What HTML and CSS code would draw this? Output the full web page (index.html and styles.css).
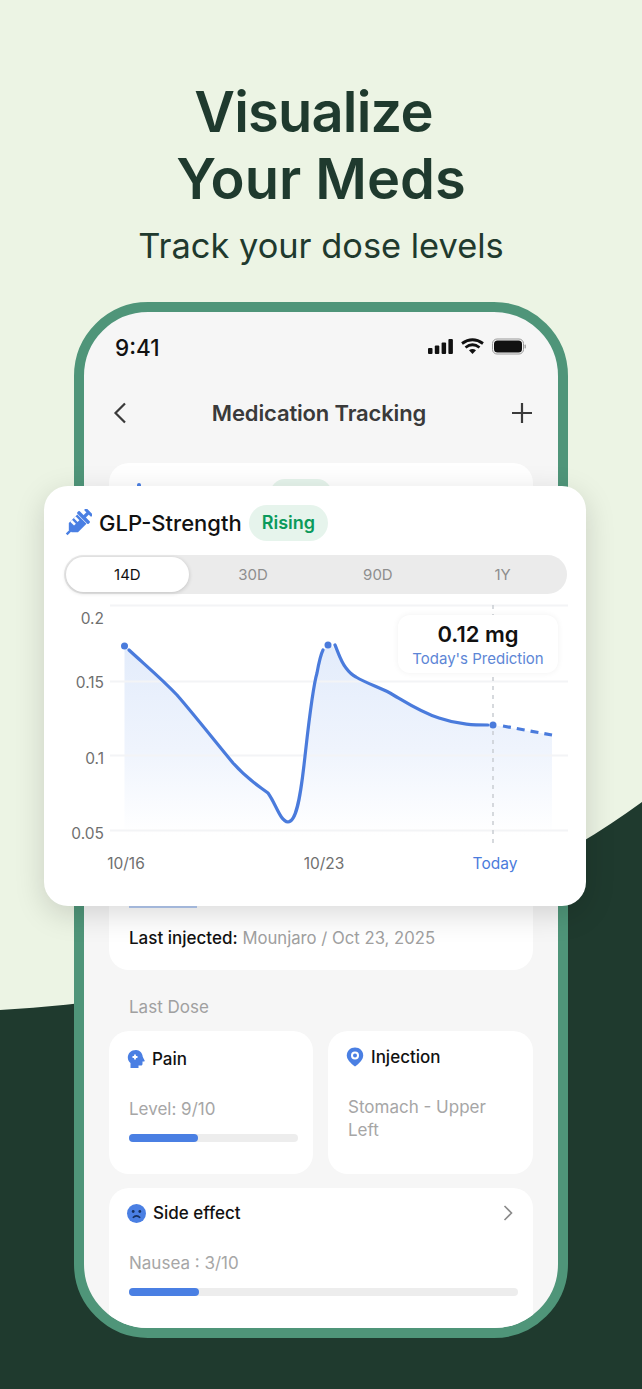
FILE: index.html
```html
<!DOCTYPE html>
<html lang="en">
<head>
  <meta charset="UTF-8">
  <title>Visualize Your Meds</title>
  <link rel="stylesheet" href="styles.css">
</head>
<body>
<div class="page">

  <!-- fondo verde oscuro -->
  <svg class="fondo" width="642" height="1389" viewBox="0 0 642 1389">
    <path d="M0 1010C250 995 480 920 642 802V1389H0Z" fill="#1F3A2E"/>
  </svg>

  <header class="hero">
    <h1><span class="linea-uno">Visualize</span><br>Your Meds</h1>
    <p>Track your dose levels</p>
  </header>

  <div class="telefono">
    <div class="status">
      <span class="hora">9:41</span>
      <svg width="98" height="20" viewBox="0 0 98 20">
        <rect x="0" y="11" width="4.500" height="6" rx="1" fill="#111"/>
        <rect x="6.800" y="8.500" width="4.500" height="8.500" rx="1" fill="#111"/>
        <rect x="13.600" y="5.500" width="4.500" height="11.500" rx="1" fill="#111"/>
        <rect x="20.400" y="2" width="4.500" height="15" rx="1" fill="#111"/>
        <path d="M34 6.500Q44.500-1 55 6.500" fill="none" stroke="#111" stroke-width="2.800"/>
        <path d="M37.500 10.500Q44.500 5 51.500 10.500" fill="none" stroke="#111" stroke-width="2.800"/>
        <path d="M41 13.300Q44.500 10.800 48 13.300L44.500 17Z" fill="#111"/>
        <rect x="64.500" y="2" width="31" height="15" rx="4.500" fill="none" stroke="#999"/>
        <rect x="66" y="3.500" width="28" height="12" rx="3.500" fill="#111"/>
        <rect x="96.500" y="7.500" width="1.500" height="4" rx=".7" fill="#aaa"/>
      </svg>
    </div>

    <div class="nav">
      <svg width="14" height="22" viewBox="0 0 14 22"><path d="M12 1.500 2.500 11 12 20.500" fill="none" stroke="#3A3A3A" stroke-width="2.200"/></svg>
      <span class="nav-titulo">Medication Tracking</span>
      <svg width="22" height="22" viewBox="0 0 22 22"><path d="M11 1V21M1 11H21" fill="none" stroke="#3A3A3A" stroke-width="2.200"/></svg>
    </div>

    <!-- tarjeta principal, casi toda tapada por la flotante -->
    <div class="tarjeta principal">
      <div class="principal-top">
        <span class="icono-oculto"></span>
        <span class="insignia-oculta"></span>
      </div>
      <div class="barra-oculta"></div>
      <div class="ultimo"><b>Last injected:</b> <span>Mounjaro / Oct 23, 2025</span></div>
    </div>

    <div class="seccion">Last Dose</div>

    <div class="dos-col">
      <div class="tarjeta mini">
        <div class="mini-titulo">
          <svg width="18" height="20" viewBox="0 0 18 20">
            <path d="M9 1C4 1 .8 4.500.8 8.500c0 2.500 1.200 4.300 2.700 5.500V19h8v-2.500h2.500c1 0 1.500-.7 1.500-1.500v-2.500h1.700c.5 0 .7-.5.4-.9L15.800 8C15.400 4 12.800 1 9 1Z" fill="#4A7FE3"/>
            <path d="M8 5.500V10.500M5.500 8H10.500" stroke="#fff" stroke-width="1.800"/>
          </svg>
          <span>Pain</span>
        </div>
        <div class="valor">Level: 9/10</div>
        <div class="barra"><div class="relleno" style="width:41%"></div></div>
      </div>
      <div class="tarjeta mini injection">
        <div class="mini-titulo">
          <svg width="18" height="20" viewBox="0 0 18 20">
            <path d="M9 0.500C4.300 0.500.8 4 .8 8.500c0 4 3.600 7.600 8.200 11 4.600-3.400 8.200-7 8.200-11C17.200 4 13.700.500 9 .500Z" fill="#4A7FE3"/>
            <circle cx="9" cy="8.500" r="4" fill="#fff"/>
            <circle cx="9" cy="8.500" r="2" fill="#4A7FE3"/>
          </svg>
          <span>Injection</span>
        </div>
        <div class="valor">Stomach - Upper Left</div>
      </div>
    </div>

    <div class="tarjeta efecto">
      <div class="mini-titulo">
        <svg width="19" height="19" viewBox="0 0 19 19">
          <circle cx="9.500" cy="9.500" r="9.500" fill="#4A7FE3"/>
          <circle cx="6.200" cy="7.500" r="1.400" fill="#16305F"/>
          <circle cx="12.800" cy="7.500" r="1.400" fill="#16305F"/>
          <path d="M5.800 13.800Q9.500 10 13.200 13.800" fill="none" stroke="#16305F" stroke-width="1.600"/>
        </svg>
        <span>Side effect</span>
        <svg class="flecha" width="10" height="16" viewBox="0 0 10 16"><path d="M1.500 1 8.500 8 1.500 15" fill="none" stroke="#8A8A8A" stroke-width="1.600"/></svg>
      </div>
      <div class="valor">Nausea : 3/10</div>
      <div class="barra"><div class="relleno" style="width:18%"></div></div>
    </div>
  </div>

  <!-- tarjeta flotante con la grafica -->
  <div class="flotante">
    <div class="flot-head">
      <svg width="28" height="28" viewBox="0 0 28 28">
        <g transform="rotate(45 14 14)" fill="#4A7FE3">
          <rect x="9" y="-2.500" width="10" height="3" rx="1"/>
          <rect x="12.300" y="0" width="3.400" height="6"/>
          <rect x="6" y="4.500" width="16" height="3.400" rx="1"/>
          <path d="M7.500 8.500H20.500V20.500L16 25H12L7.500 20.500Z"/>
          <rect x="12.800" y="24" width="2.400" height="6"/>
          <rect x="7.500" y="11" width="5.500" height="2.600" fill="#fff"/>
          <rect x="7.500" y="16" width="5.500" height="2.600" fill="#fff"/>
        </g>
      </svg>
      <span class="flot-titulo">GLP-Strength</span>
      <span class="insignia">Rising</span>
    </div>

    <div class="segmento">
      <span class="activo">14D</span>
      <span>30D</span>
      <span>90D</span>
      <span>1Y</span>
    </div>

    <div class="grafica">
      <!-- viewBox: x = pagina - 44, y = pagina - 600 -->
      <svg width="542" height="306" viewBox="0 0 542 306">
        <defs>
          <linearGradient id="area" x1="0" y1="0" x2="0" y2="1">
            <stop offset="0" stop-color="#E3ECFB"/>
            <stop offset=".55" stop-color="#EFF4FD"/>
            <stop offset="1" stop-color="#FFFFFF"/>
          </linearGradient>
        </defs>
        <path d="M80.500 46C100 64 117 78 133 95C152 117 170 140 189 163C204 180 215 186 224 193C232 204 236 221 244 222C252 222 256 200 260 165C264 130 268 90 273 73C276 60 279 50 284 45C289 44 293 52 296 60C300 68 304 73 308 75C320 82 334 87 346 93C360 101 376 112 395 118C415 125 435 125 449 125L508 135V235H80.500Z" fill="url(#area)"/>
        <g stroke="#F3F4F6" stroke-width="2">
          <path d="M66 5.500H524"/>
          <path d="M66 81.500H524"/>
          <path d="M66 155.500H524"/>
          <path d="M66 230.500H524"/>
        </g>
        <path d="M449 5V248" stroke="#C9CDD2" stroke-width="1.500" stroke-dasharray="4 5"/>
        <path d="M85 50C100 64 117 78 133 95C152 117 170 140 189 163C204 180 215 186 224 193C232 204 236 221 244 222C252 222 256 200 260 165C264 130 268 90 273 73C275 62 277 54 279 50M291 45C294 52 297 62 302 68C305 72 308 75 312 77C322 83 334 87 346 93C360 101 376 112 395 118C415 125 432 125 444 125" fill="none" stroke="#4A7BDC" stroke-width="3.200" stroke-linecap="round"/>
        <path d="M459 126L508 135" fill="none" stroke="#4A7BDC" stroke-width="3.200" stroke-dasharray="8 6"/>
        <circle cx="80.500" cy="46" r="3.500" fill="#4A7BDC"/>
        <circle cx="284" cy="45" r="3.500" fill="#4A7BDC"/>
        <circle cx="449" cy="125" r="3.500" fill="#4A7BDC"/>
        <g class="eje">
          <text x="60" y="24" text-anchor="end">0.2</text>
          <text x="60" y="88" text-anchor="end">0.15</text>
          <text x="60" y="164" text-anchor="end">0.1</text>
          <text x="60" y="239" text-anchor="end">0.05</text>
          <text x="82" y="269" text-anchor="middle">10/16</text>
          <text x="280" y="269" text-anchor="middle">10/23</text>
          <text x="451" y="269" text-anchor="middle" class="hoy">Today</text>
        </g>
      </svg>
      <div class="prediccion">
        <b>0.12 mg</b>
        <span>Today's Prediction</span>
      </div>
    </div>
  </div>

</div>
</body>
</html>
```

FILE: styles.css
```css
* {
  box-sizing: border-box;
}
body {
  margin: 0;
  font-family: Inter, "Noto Sans", sans-serif;
}
.page {
  position: relative;
  width: 642px;
  height: 1389px;
  overflow: hidden;
  background-color: #ECF4E4;
}
.fondo {
  position: absolute;
  left: 0;
  top: 0;
}
.hero {
  position: relative;
  padding-top: 79px;
  text-align: center;
  color: #1F3A2E;
}
.hero h1 {
  margin: 0;
  font-size: 56px;
  line-height: 67px;
  font-weight: 600;
}
.linea-uno {
  display: inline-block;
  padding-right: 15px;
  letter-spacing: -0.8px;
}
.hero p {
  margin: 9px 0 0;
  font-size: 34.4px;
  line-height: 48px;
  font-weight: 400;
}

/* telefono */
.telefono {
  position: relative;
  width: 494px;
  height: 1036px;
  margin: 32px 0 0 74px;
  padding: 0 25px;
  border: 10px solid #4F9579;
  border-radius: 74px;
  background-color: #F6F6F6;
  overflow: hidden;
}
.status {
  display: flex;
  justify-content: space-between;
  align-items: center;
  height: 70px;
  padding: 0 0 0 6px;
  margin-right: 7px;
}
.hora {
  font-size: 22.5px;
  font-weight: 500;
  color: #111;
}
.nav {
  display: flex;
  justify-content: space-between;
  align-items: center;
  height: 62px;
  padding: 0 0 0 4px;
}
.nav-titulo {
  font-size: 22px;
  font-weight: 600;
  letter-spacing: -0.15px;
  color: #3A3A3A;
}
.tarjeta {
  background-color: #FFFFFF;
  border-radius: 20px;
}
.principal {
  height: 507px;
  margin-top: 19px;
  padding: 16px 20px 0;
}
.principal-top {
  display: flex;
  align-items: flex-start;
  padding-left: 8px;
  height: 427px;
}
.icono-oculto {
  width: 4px;
  height: 8px;
  margin-top: 4px;
  border-radius: 2px;
  background-color: #4A7FE3;
}
.insignia-oculta {
  width: 62px;
  height: 30px;
  margin-left: 129px;
  border-radius: 15px;
  background-color: #E6F4EC;
}
.barra-oculta {
  width: 68px;
  height: 2px;
  background-color: #B5CBF2;
}
.ultimo {
  margin-top: 19px;
  font-size: 17px;
  line-height: 22px;
  white-space: nowrap;
}
.ultimo b {
  font-weight: 500;
  color: #111;
}
.ultimo span {
  font-size: 16.7px;
  color: #A0A0A0;
}
.seccion {
  margin: 24px 0 0 20px;
  font-size: 17px;
  line-height: 26px;
  color: #A0A0A0;
}
.dos-col {
  display: grid;
  grid-template-columns: 204px 205px;
  gap: 15px;
  margin-top: 11px;
}
.mini {
  height: 143px;
  padding: 16px 15px 0 18px;
}
.mini-titulo {
  display: flex;
  align-items: center;
  gap: 7px;
  font-size: 17px;
  line-height: 24px;
  font-weight: 450;
  color: #111;
}
.injection .mini-titulo {
  margin-top: -2px;
}
.valor {
  margin: 27px 0 0 2px;
  font-size: 17px;
  line-height: 23px;
  color: #A6A6A6;
}
.barra {
  height: 8px;
  margin: 13px 0 0 2px;
  border-radius: 4px;
  background-color: #EDEDED;
}
.relleno {
  height: 100%;
  border-radius: 4px;
  background-color: #4A7FE3;
}
.efecto {
  height: 170px;
  margin-top: 14px;
  padding: 13px 15px 0 18px;
}
.flecha {
  margin-left: auto;
  margin-right: 5px;
}

/* tarjeta flotante */
.flotante {
  position: absolute;
  left: 44px;
  top: 486px;
  width: 542px;
  height: 420px;
  padding-top: 19px;
  border-radius: 24px;
  background-color: #FFFFFF;
  box-shadow: 0 8px 30px rgba(0, 0, 0, 0.15);
}
.flot-head {
  display: flex;
  align-items: center;
  height: 36px;
  padding-left: 20px;
}
.flot-titulo {
  margin-left: 7px;
  font-size: 22px;
  font-weight: 450;
  color: #111;
}
.insignia {
  margin-left: 7px;
  padding: 0 13px;
  line-height: 36px;
  border-radius: 18px;
  font-size: 18px;
  font-weight: 600;
  color: #0B9A5B;
  background-color: #E6F4EC;
}
.segmento {
  display: grid;
  grid-template-columns: repeat(4, 1fr);
  height: 39px;
  margin: 14px 19px 0 20px;
  padding: 2px;
  border-radius: 20px;
  background-color: #EBEBEB;
}
.segmento span {
  display: flex;
  align-items: center;
  justify-content: center;
  border-radius: 18px;
  font-size: 15px;
  color: #8E8E8E;
}
.segmento .activo {
  margin-right: 2px;
  background-color: #FFFFFF;
  color: #111;
  box-shadow: 0 1px 4px rgba(0, 0, 0, 0.18);
}
.grafica {
  position: relative;
  margin-top: 6px;
}
.grafica svg {
  display: block;
}
.eje text {
  font-family: Inter, sans-serif;
  font-size: 15.5px;
  fill: #6F6F6F;
}
.eje .hoy {
  fill: #4A7BDC;
}
.prediccion {
  position: absolute;
  left: 354px;
  top: 15px;
  width: 160px;
  height: 58px;
  display: flex;
  flex-direction: column;
  align-items: center;
  padding-top: 5px;
  border-radius: 12px;
  background-color: #FFFFFF;
  box-shadow: 0 0 6px rgba(0, 0, 0, 0.06);
}
.prediccion b {
  font-size: 22px;
  line-height: 29px;
  font-weight: 600;
  color: #111;
}
.prediccion span {
  font-size: 15px;
  line-height: 20px;
  color: #5D86D6;
}
```
